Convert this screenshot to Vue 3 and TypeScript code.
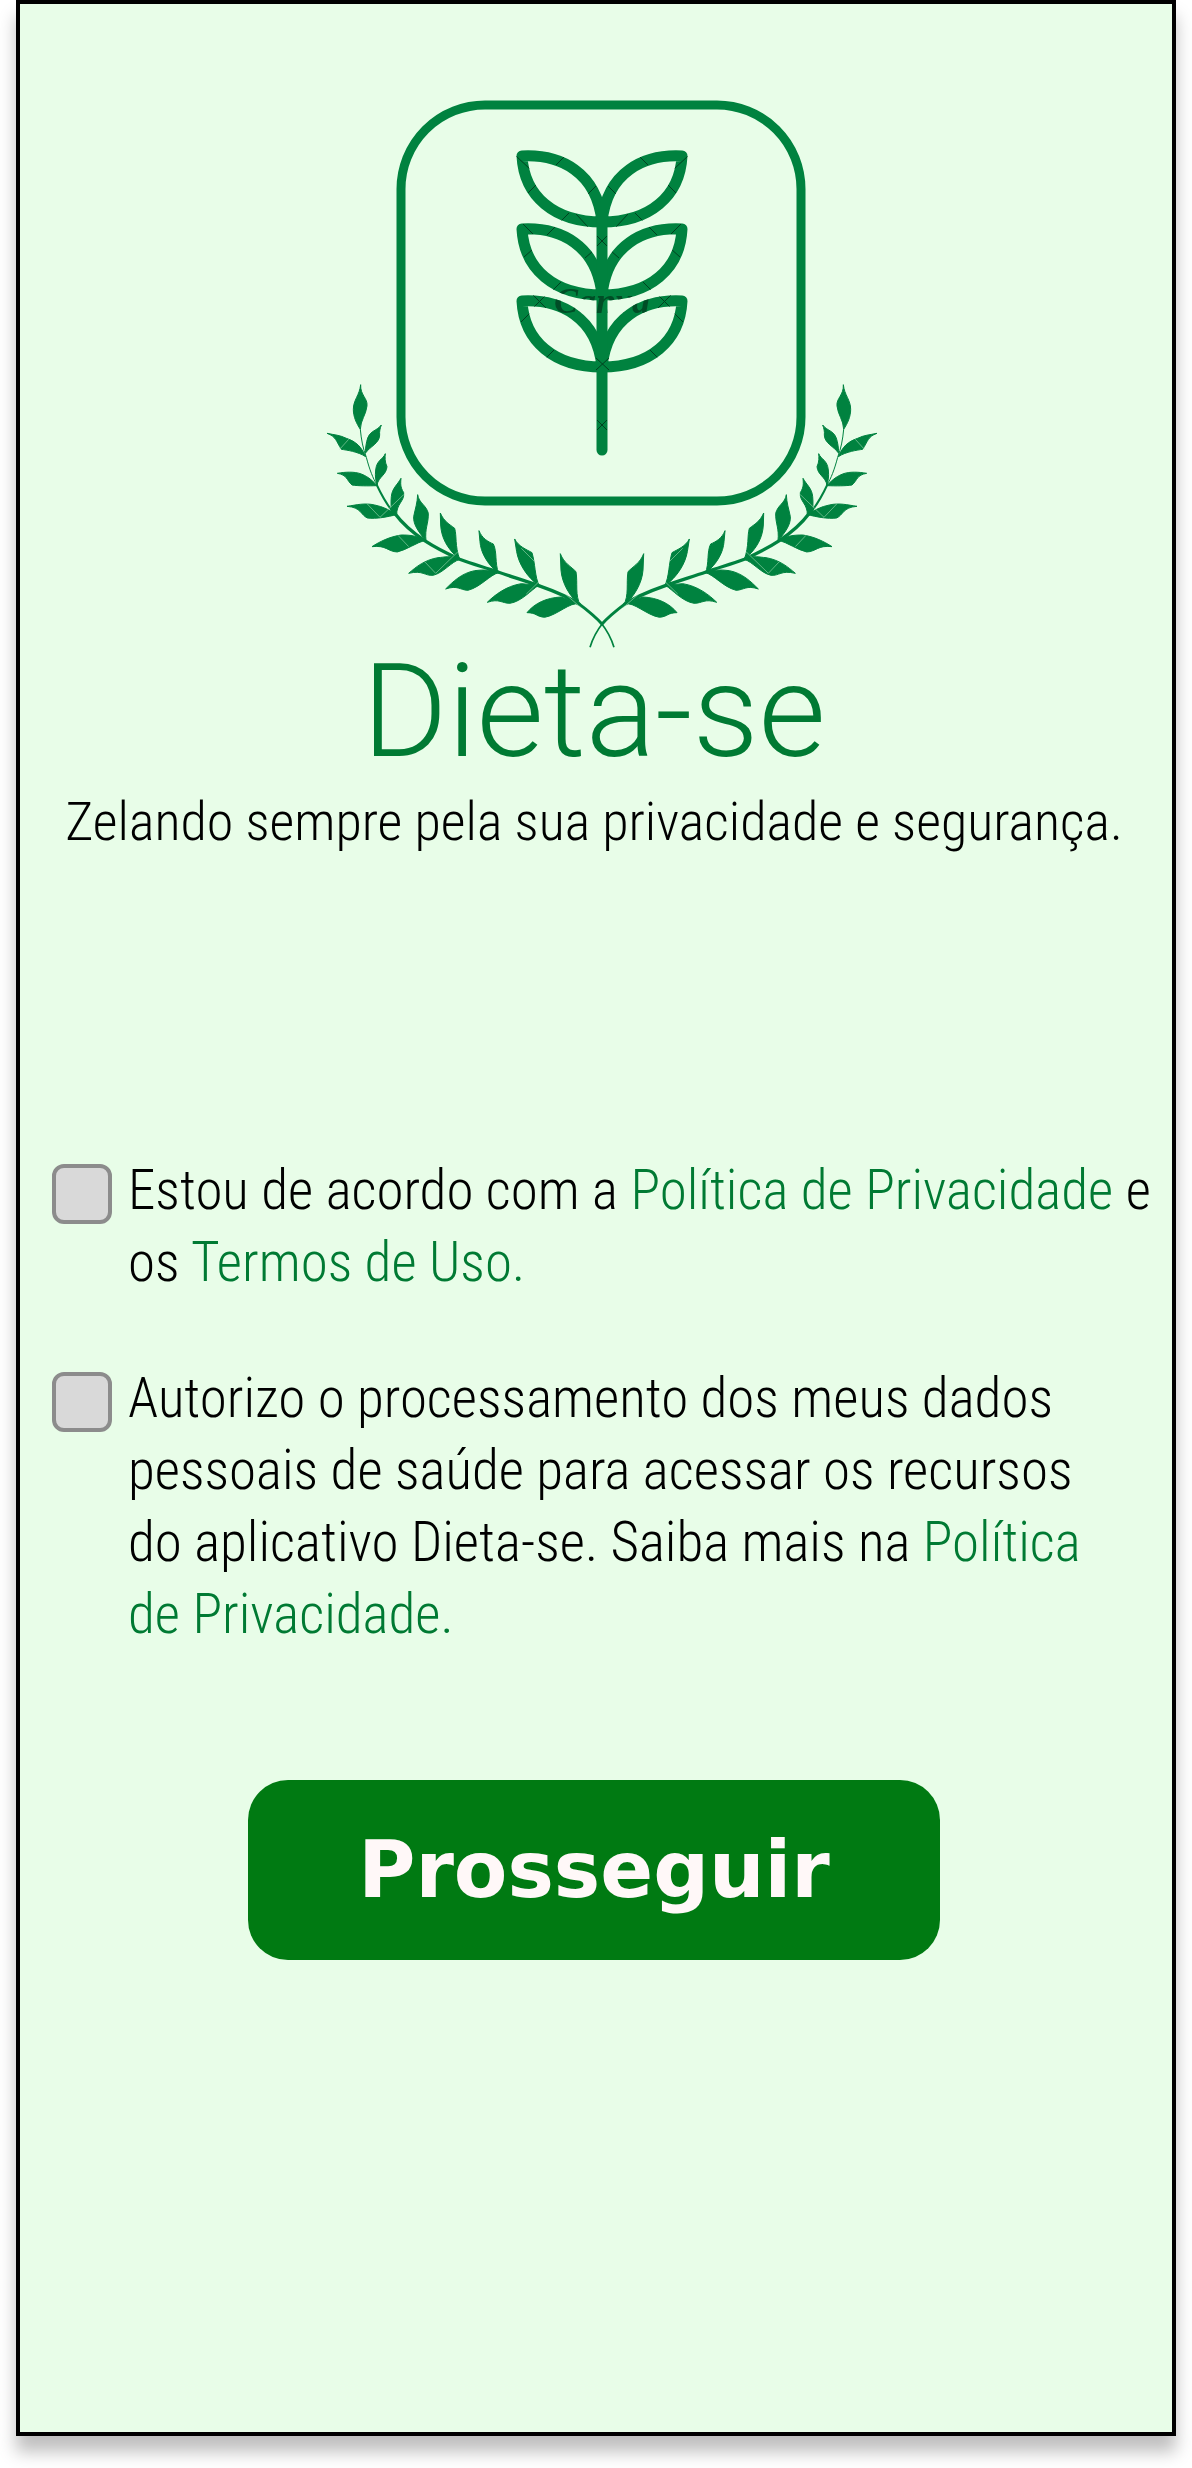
<script setup lang="ts">
import { ref } from 'vue'

const acceptedTerms = ref(false)
const acceptedHealthData = ref(false)

// Vertical offsets of the three leaf pairs on the ear of wheat
const leafRows: number[] = [0, 73, 145]

const laurelLeaves: string[] = [
  'M158 44C156 75 180 85 177 108C174 135 158 150 157 178C145 160 136 140 136 118C136 90 155 75 158 44Z',
  'M57 190C80 195 95 195 115 205C145 215 160 230 173 260C150 245 115 240 100 238C85 215 85 200 57 190Z',
  'M220 165C205 185 183 180 176 215C173 230 172 240 172 250C185 230 215 220 215 195C214 185 216 175 220 165Z',
  'M88 310C110 306 140 304 160 312C185 322 195 335 208 347C180 348 150 348 132 345C115 330 118 315 88 310Z',
  'M232 251C225 268 206 270 203 300C201 320 203 330 207 345C212 320 235 315 237 290C230 275 231 262 232 251Z',
  'M117 409C145 405 170 398 200 405C225 410 245 420 266 434C240 440 205 448 178 444C158 435 160 412 117 409Z',
  'M279 325C268 345 252 355 250 380C248 400 250 410 250 430L266 436C265 400 290 395 287 368C276 350 278 340 279 325Z',
  'M192 530C215 515 245 500 280 495C310 495 325 498 354 510C325 518 295 540 268 546C240 545 235 525 192 530Z',
  'M329 374C333 400 355 405 361 430C362 460 350 475 354 512C335 490 315 465 317 440C322 415 328 400 329 374Z',
  'M302 610C325 590 350 570 390 563C410 562 425 555 456 568C430 575 405 610 375 616C350 618 345 600 302 610Z',
  'M397 429C408 455 425 463 440 475C447 500 440 525 455 568C415 535 400 500 398 465Z',
  'M413 657C435 635 460 610 500 602C530 598 550 600 572 608C545 615 520 650 480 661C455 660 450 645 413 657Z',
  'M513 482C522 505 540 515 556 522C568 545 560 580 572 610C535 580 518 545 516 515Z',
  'M538 697C560 675 595 648 640 641L692 646C670 660 640 695 606 700C580 700 575 685 538 697Z',
  'M620 507C632 530 655 538 672 548C682 580 680 620 694 648C655 620 632 580 626 545Z',
  'M657 728C680 700 715 683 760 681L815 702C785 695 750 735 710 742C685 740 685 728 657 728Z',
  'M757 551C768 580 790 590 804 605C810 640 800 675 818 708C785 680 762 640 759 600Z',
]
</script>

<template>
  <main class="screen">
    <header class="brand">
      <svg class="logo" viewBox="311 100 570 552" aria-hidden="true">
        <defs>
          <g id="leaf-pair">
            <path d="M524 156C562 154 599 172 604 222C556 222 526 196 524 156Z" />
            <path d="M684 156C646 154 609 172 604 222C652 222 682 196 684 156Z" />
          </g>
          <g id="wheat" fill="none" stroke-width="11" stroke-linecap="round" stroke-linejoin="round">
            <use v-for="dy in leafRows" :key="dy" href="#leaf-pair" :y="dy" />
            <path d="M604 222V450" />
          </g>
          <mask id="wheat-mask" maskUnits="userSpaceOnUse" x="500" y="130" width="210" height="340">
            <use href="#wheat" stroke="#fff" />
          </mask>
          <g id="laurel">
            <g stroke="#00823f" stroke-width="3" stroke-linejoin="round">
              <path v-for="leaf in laurelLeaves" :key="leaf" :d="leaf" />
            </g>
            <g fill="none" stroke="#00823f">
              <path stroke-width="3" d="M157 178C160 210 165 235 175 262C185 300 195 325 207 345" />
              <path stroke-width="6" d="M205 342C225 385 240 410 262 434" />
              <path stroke-width="10" d="M260 430C290 470 320 492 350 512C385 535 420 552 455 568C495 583 530 592 570 606C610 620 650 632 692 647C735 662 780 680 816 704" />
              <path stroke-width="9" d="M812 701C840 722 862 740 884 764" />
              <path stroke-width="5" d="M880 760C896 780 909 802 918 832" />
            </g>
            <path class="sheen" d="M95 238L122 208M176 400L216 442L287 374M270 496L302 530M350 575L383 610L450 545M655 672L692 636M775 675L818 712M640 535L680 575" />
          </g>
        </defs>

        <rect x="403" y="105" width="400" height="396" rx="84" fill="none" stroke="#00823f" stroke-width="9" />
        <use href="#wheat" stroke="#00823f" />
        <g mask="url(#wheat-mask)">
          <path
            class="crack"
            d="M518 156L532 169M558 165L566 157M530 193L538 185M590 194L598 186M562 222L571 213M578 214L590 227
               M525 224L535 234M549 235L558 226M526 257L535 249M587 258L595 251M555 290L563 282
               M535 295L548 308M548 295L535 308M523 322L532 313M548 358L556 350
               M690 156L676 169M650 165L642 157M678 193L670 185M618 194L610 186M646 222L637 213M630 214L618 227
               M683 224L673 234M659 235L650 226M682 257L673 249M621 258L613 251M653 290L645 282
               M673 295L660 308M660 295L673 308M685 322L676 313M660 358L652 350
               M599 236L609 246M609 236L599 246M598 358L611 370M611 358L598 370M599 420L609 430M609 420L599 430"
          />
          <text class="stamp" x="604" y="313" text-anchor="middle">Canva</text>
        </g>
        <g fill="#00823f">
          <use href="#laurel" transform="translate(310 370) scale(.3333)" />
          <use href="#laurel" transform="translate(898 370) scale(-.3333 .3333)" />
        </g>
      </svg>
      <h1>Dieta-se</h1>
      <p class="tagline">Zelando sempre pela sua privacidade e segurança.</p>
    </header>

    <form class="consent" @submit.prevent>
      <div class="option">
        <input id="terms" v-model="acceptedTerms" type="checkbox" />
        <label for="terms">
          Estou de acordo com a <a href="#privacidade">Política de Privacidade</a> e os
          <a href="#termos">Termos de Uso.</a>
        </label>
      </div>
      <div class="option">
        <input id="health" v-model="acceptedHealthData" type="checkbox" />
        <label for="health" class="narrow">
          Autorizo o processamento dos meus dados pessoais de saúde para acessar os recursos do
          aplicativo Dieta-se. Saiba mais na <a href="#privacidade">Política de Privacidade.</a>
        </label>
      </div>
      <button type="submit">Prosseguir</button>
    </form>
  </main>
</template>

<style>
body {
  margin: 0;
  background: #fff;
}
</style>

<style scoped>
.screen {
  box-sizing: border-box;
  min-height: calc(100vh - 32px);
  margin: 0 16px 32px;
  padding: 96px 16px 64px;
  border: 4px solid #000;
  background: #e8fde8;
  box-shadow: 0 16px 16px rgba(0, 0, 0, 0.25);
  color: #000;
  font-family: "Roboto Condensed", "Open Sans Condensed", Roboto, sans-serif;
  font-size: 55px;
  font-weight: 300;
  line-height: 72px;
}

.brand {
  display: flex;
  flex-direction: column;
  align-items: center;
  padding-right: 4px;
  text-align: center;
}

.logo {
  display: block;
  width: 570px;
  max-width: 100%;
}

.sheen {
  fill: none;
  stroke: #8fd0a6;
  stroke-width: 2;
}

.crack {
  fill: none;
  stroke: #00401f;
  stroke-width: 1;
}

.stamp {
  fill: #004d26;
  font: italic 700 36px "Liberation Serif", serif;
}

h1 {
  margin: 0 0 14px;
  color: #007a33;
  font-family: Roboto, sans-serif;
  font-size: 130px;
  font-weight: 300;
  line-height: 120px;
}

.tagline {
  margin: 0;
  font-size: 54px;
}

.consent {
  display: flex;
  flex-direction: column;
  gap: 64px;
  margin-top: 296px;
  padding-left: 16px;
}

.option {
  display: flex;
  align-items: flex-start;
  gap: 16px;
}

.option input {
  appearance: none;
  flex: none;
  box-sizing: border-box;
  width: 60px;
  height: 60px;
  margin: 10px 0 0;
  border: 4px solid #8c8c8c;
  border-radius: 12px;
  background: #d9d9d9;
}

.option input:checked {
  background: #007a33;
}

.narrow {
  max-width: 980px;
}

a {
  color: #007a33;
  text-decoration: none;
}

button {
  align-self: center;
  width: 692px;
  max-width: 100%;
  height: 180px;
  margin: 66px 20px 0 0;
  padding: 0;
  border: 0;
  border-radius: 40px;
  background: #007a12;
  color: #fff8f8;
  font-family: "DejaVu Sans", sans-serif;
  font-size: 78px;
  font-weight: 700;
  line-height: 1;
}
</style>
